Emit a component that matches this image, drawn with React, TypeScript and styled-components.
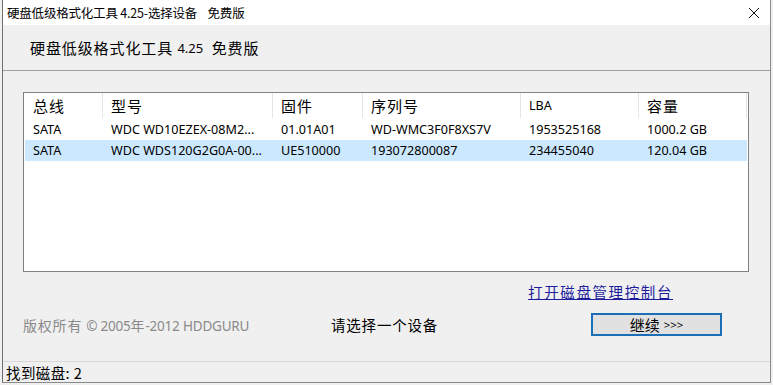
import React from "react";
import styled, { createGlobalStyle } from "styled-components";

const GlobalStyle = createGlobalStyle`
  html, body {
    margin: 0;
    padding: 0;
    background: #f0f0f0;
    width: 773px;
    height: 385px;
    overflow: hidden;
  }
  body {
    font-family: "Noto Sans", "Noto Sans CJK SC", sans-serif;
    color: #000;
  }
`;

const CJK = `"Noto Sans CJK SC", "Noto Sans", sans-serif`;
const UI = `"Noto Sans", "Noto Sans CJK SC", sans-serif`;

const Window = styled.div`
  margin-left: 2px;
  width: 769px;
  height: 383px;
  box-sizing: border-box;
  border-left: 1px solid #6f6f6f;
  border-right: 1px solid #8a8a8a;
  border-bottom: 1px solid #8a8a8a;
  background: #f0f0f0;
  display: flex;
  flex-direction: column;
`;

const TitleBar = styled.div`
  height: 25px;
  background: #ffffff;
  display: flex;
  align-items: center;
  justify-content: space-between;
  padding: 0 10px 0 4px;
`;

const TitleText = styled.span`
  font-family: ${CJK};
  font-size: 12.5px;
  white-space: pre;
  letter-spacing: -0.2px;
`;

const CloseIcon = () => (
  <svg width="12" height="12" viewBox="0 0 12 12">
    <path d="M1 1 L11 11 M11 1 L1 11" stroke="#111" strokeWidth="1" />
  </svg>
);

const Header = styled.div`
  height: 46px;
  box-sizing: border-box;
  border-bottom: 1px solid #a0a0a0;
  display: flex;
  align-items: center;
  padding-left: 27px;
  font-family: ${CJK};
  font-size: 15px;
  letter-spacing: 0.9px;
  white-space: pre;
`;

const Version = styled.span`
  font-family: ${UI};
  font-size: 13px;
  letter-spacing: 0;
`;

const Body = styled.div`
  flex: 1;
  display: flex;
  flex-direction: column;
  padding: 21px 21px 0 20px;
`;

const List = styled.div`
  height: 180px;
  box-sizing: border-box;
  border: 1px solid #828282;
  background: #fff;
  padding: 0 1px;
`;

const Row = styled.div<{ $selected?: boolean; $head?: boolean }>`
  display: grid;
  grid-template-columns: 78px 170px 90px 158px 118px 108px;
  height: ${(p) => (p.$head ? "25px" : "21px")};
  margin-bottom: ${(p) => (p.$head ? "1px" : "0")};
  background: ${(p) => (p.$selected ? "#cce8ff" : "transparent")};
  align-items: stretch;
`;

const Cell = styled.div<{ $head?: boolean; $latin?: boolean }>`
  display: flex;
  align-items: center;
  padding-left: 8px;
  font-family: ${(p) => (p.$head && !p.$latin ? CJK : UI)};
  font-size: ${(p) => (p.$head && !p.$latin ? "15px" : "12.6px")};
  letter-spacing: ${(p) => (p.$head && !p.$latin ? "1px" : "0")};
  border-right: ${(p) => (p.$head ? "1px solid #e5e5e5" : "none")};
  white-space: nowrap;
  overflow: hidden;
`;

const LinkRow = styled.div`
  display: flex;
  justify-content: flex-end;
  padding: 9px 76px 0 0;
  height: 22px;
`;

const Link = styled.a`
  font-family: ${CJK};
  font-size: 14.5px;
  letter-spacing: 1.6px;
  color: #1c1c9c;
  text-decoration: underline;
  cursor: pointer;
`;

const ActionRow = styled.div`
  display: flex;
  align-items: center;
  height: 25px;
  margin-top: 9px;
`;

const Copyright = styled.span`
  width: 308px;
  font-family: ${CJK};
  font-size: 14px;
  color: #8a8a8a;
  letter-spacing: 0.8px;
  white-space: pre;
`;

const CopyLatin = styled.span`
  font-family: ${UI};
  font-size: 13.5px;
  letter-spacing: -0.2px;
`;

const Prompt = styled.span`
  width: 260px;
  font-family: ${CJK};
  font-size: 14.5px;
  letter-spacing: 0.8px;
`;

const Button = styled.button`
  width: 131px;
  height: 23px;
  box-sizing: border-box;
  border: 2px solid #1a6fb6;
  background: #e1e1e1;
  font-family: ${CJK};
  font-size: 15px;
  padding: 0;
  display: flex;
  align-items: center;
  justify-content: center;
  gap: 4px;
`;

const Arrows = styled.span`
  font-family: ${UI};
  font-size: 11.5px;
`;

const StatusBar = styled.div`
  margin-top: auto;
  height: 20px;
  border-top: 1px solid #d7d7d7;
  display: flex;
  align-items: center;
  padding-left: 3px;
  font-family: ${CJK};
  font-size: 14.5px;
  letter-spacing: 0.4px;
`;

const columns = ["总线", "型号", "固件", "序列号", "LBA", "容量"];

const disks = [
  ["SATA", "WDC WD10EZEX-08M2...", "01.01A01", "WD-WMC3F0F8XS7V", "1953525168", "1000.2 GB"],
  ["SATA", "WDC WDS120G2G0A-00...", "UE510000", "193072800087", "234455040", "120.04 GB"],
];

export default function App() {
  return (
    <>
      <GlobalStyle />
      <Window>
        <TitleBar>
          <TitleText>硬盘低级格式化工具 4.25-选择设备    免费版</TitleText>
          <CloseIcon />
        </TitleBar>
        <Header>
          硬盘低级格式化工具 <Version>4.25</Version>  免费版
        </Header>
        <Body>
          <List>
            <Row $head>
              {columns.map((c) => (
                <Cell key={c} $head $latin={c === "LBA"}>
                  {c}
                </Cell>
              ))}
            </Row>
            {disks.map((d, i) => (
              <Row key={i} $selected={i === 1}>
                {d.map((v, j) => (
                  <Cell key={j}>{v}</Cell>
                ))}
              </Row>
            ))}
          </List>
          <LinkRow>
            <Link>打开磁盘管理控制台</Link>
          </LinkRow>
          <ActionRow>
            <Copyright>
              版权所有 <CopyLatin>© 2005</CopyLatin>年<CopyLatin>-2012 HDDGURU</CopyLatin>
            </Copyright>
            <Prompt>请选择一个设备</Prompt>
            <Button>
              继续 <Arrows>&gt;&gt;&gt;</Arrows>
            </Button>
          </ActionRow>
        </Body>
        <StatusBar>找到磁盘: 2</StatusBar>
      </Window>
    </>
  );
}
